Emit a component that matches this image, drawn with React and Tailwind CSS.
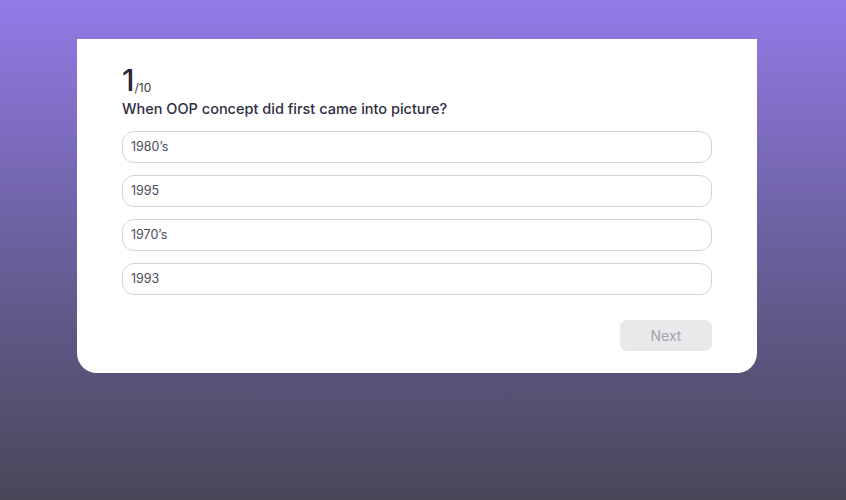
export default function App() {
  const options = ["1980’s", "1995", "1970’s", "1993"];
  return (
    <div
      className="w-full h-[500px] overflow-hidden bg-gradient-to-b from-[#927be8] via-[#6b5f9c] to-[#4a4658] pt-[39px]"
      style={{ fontFamily: "Inter, 'Noto Sans', sans-serif" }}
    >
      <div className="ml-[77px] w-[680px] h-[334px] bg-white rounded-b-[20px] pl-[45px] pr-[45px] pt-[24px]">
        <div className="flex items-end text-[#2a2838] h-[32px]">
          <span className="text-[30px] leading-none font-medium">1</span>
          <span className="text-[12px] leading-none mb-[1px] text-[#3a3848]">/10</span>
        </div>
        <div className="mt-[4px] text-[14.5px] font-medium text-[#2f2c44] leading-[20px]">
          When OOP concept did first came into picture?
        </div>
        <div className="mt-[12px] flex flex-col gap-[12px] w-[590px]">
          {options.map((o) => (
            <div
              key={o}
              className="h-[32px] rounded-[12px] border-[1.5px] border-[#d4d4d8] flex items-center pl-[8px] text-[12.5px] text-[#4b4a5c]"
            >
              {o}
            </div>
          ))}
        </div>
        <div className="mt-[25px] w-[590px] flex justify-end">
          <div className="w-[92px] h-[31px] rounded-[7px] bg-[#e9e9ec] flex items-center justify-center text-[14px] text-[#a3a3a8]">
            Next
          </div>
        </div>
      </div>
    </div>
  );
}
